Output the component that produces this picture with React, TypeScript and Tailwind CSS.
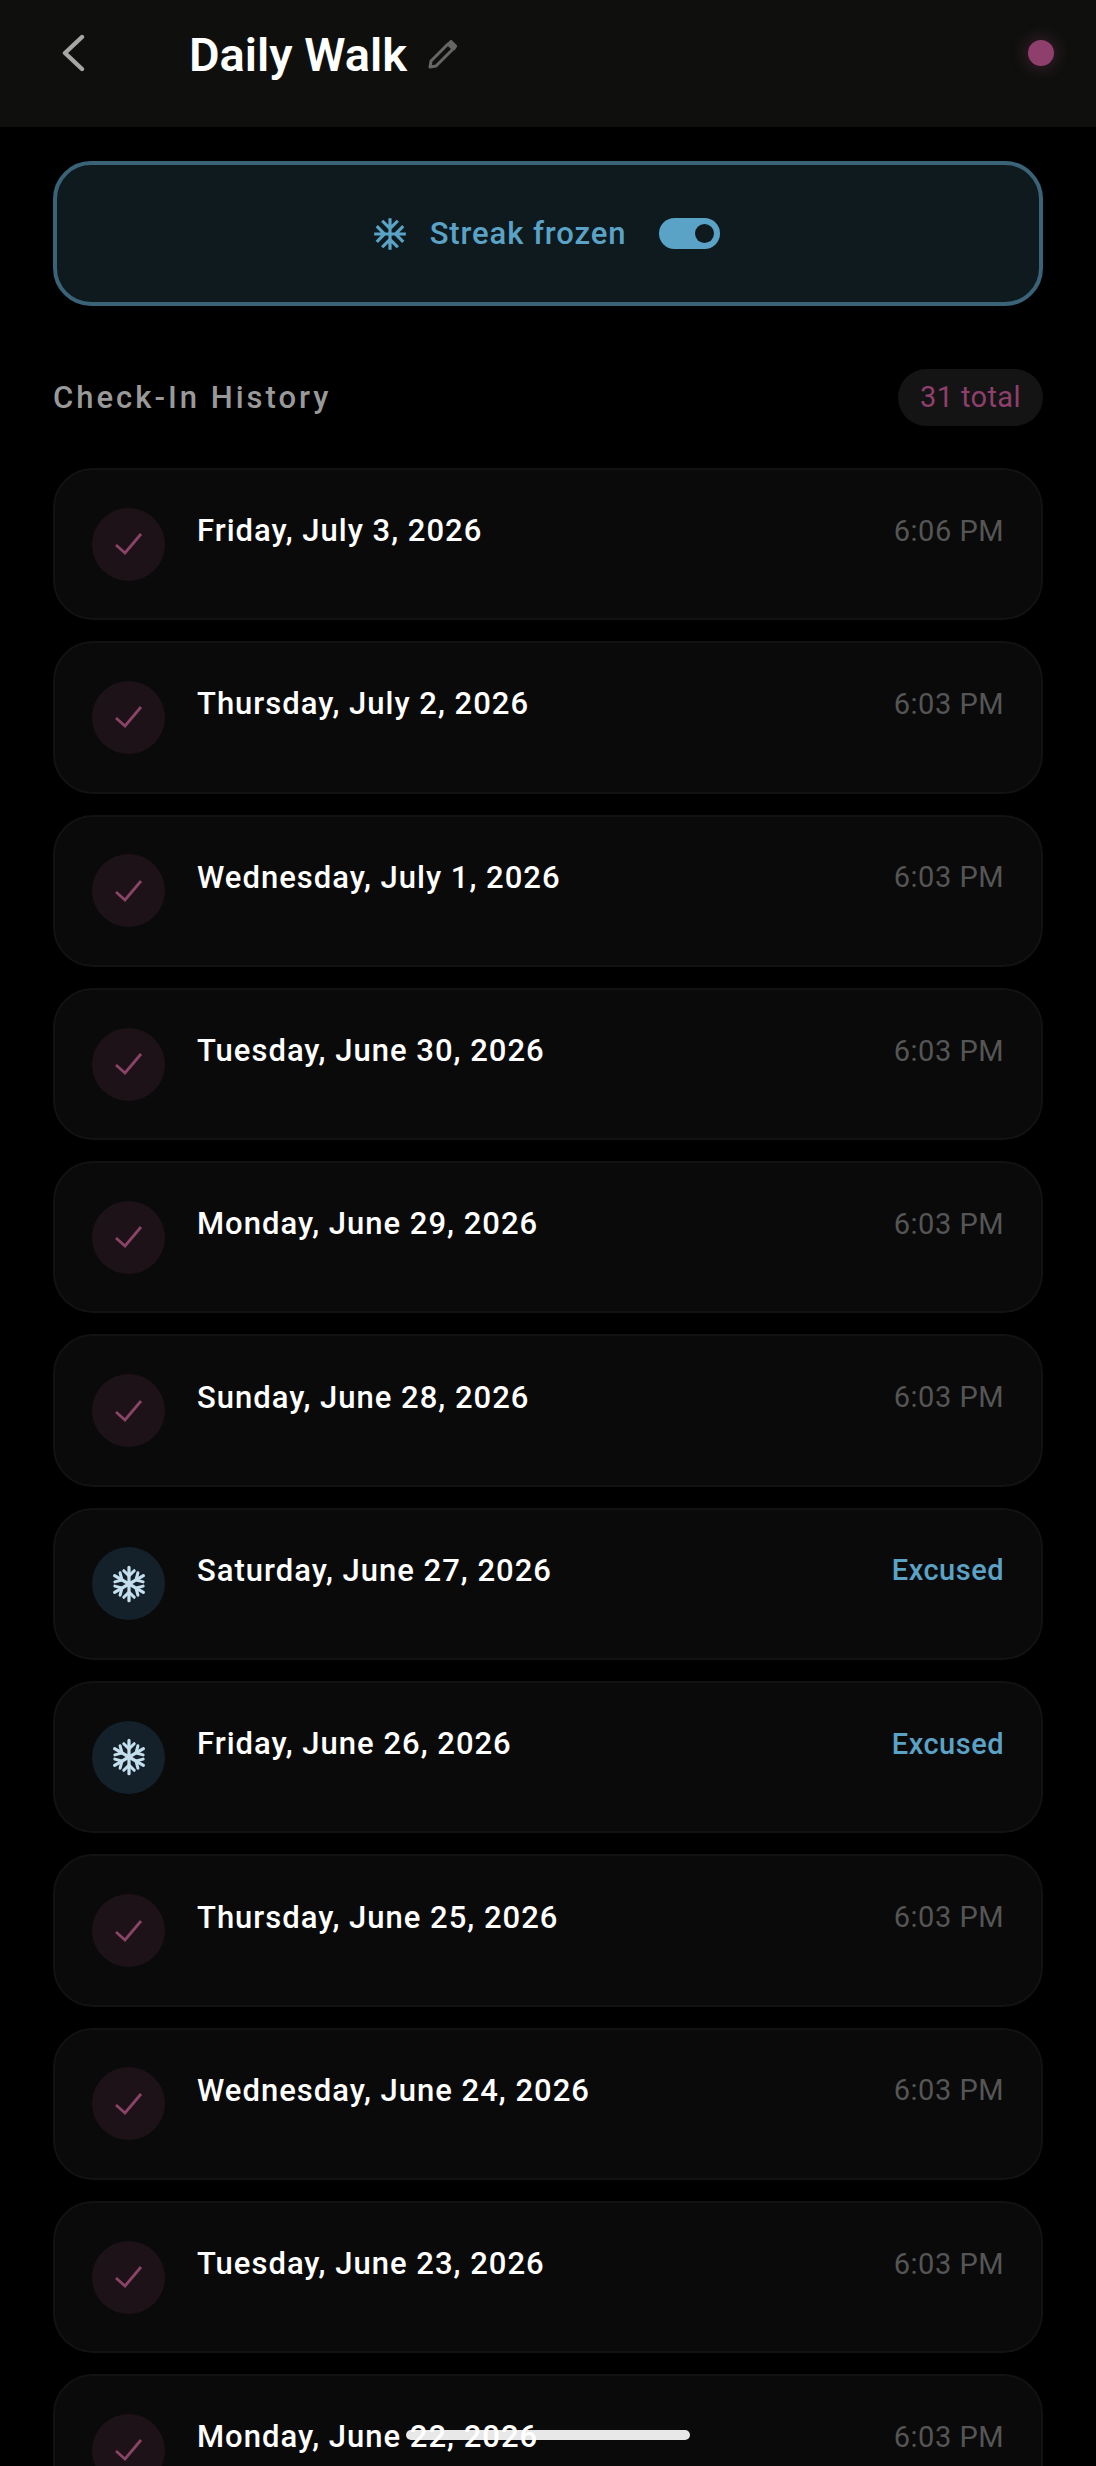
import React from 'react'
import { MdAcUnit } from 'react-icons/md'

const rows = [
    { date: 'Friday, July 3, 2026', time: '6:06 PM' },
    { date: 'Thursday, July 2, 2026', time: '6:03 PM' },
    { date: 'Wednesday, July 1, 2026', time: '6:03 PM' },
    { date: 'Tuesday, June 30, 2026', time: '6:03 PM' },
    { date: 'Monday, June 29, 2026', time: '6:03 PM' },
    { date: 'Sunday, June 28, 2026', time: '6:03 PM' },
    { date: 'Saturday, June 27, 2026', excused: true },
    { date: 'Friday, June 26, 2026', excused: true },
    { date: 'Thursday, June 25, 2026', time: '6:03 PM' },
    { date: 'Wednesday, June 24, 2026', time: '6:03 PM' },
    { date: 'Tuesday, June 23, 2026', time: '6:03 PM' },
    { date: 'Monday, June 22, 2026', time: '6:03 PM' },
]

function Flake() {
    const arm = (
        <g>
            <line x1="20" y1="20" x2="20" y2="2.5" strokeWidth="3.4" />
            <polyline points="14.5,6 20,11.5 25.5,6" strokeWidth="3.2" />
        </g>
    )
    return (
        <svg width="38" height="38" viewBox="0 0 40 40" fill="none" stroke="#c3dfed" strokeLinecap="round">
            {[0, 60, 120, 180, 240, 300].map((a) => (
                <g key={a} transform={`rotate(${a} 20 20)`}>{arm}</g>
            ))}
        </svg>
    )
}

function Row({ date, time, excused }: { date: string; time?: string; excused?: boolean }) {
    return (
        <div className="flex h-[152.3px] shrink-0 items-center rounded-[40px] border-2 border-[#121212] bg-[#0a0a0a] pl-[37px] pr-[37px]">
            {excused ? (
                <div className="flex h-[73px] w-[73px] shrink-0 items-center justify-center rounded-full bg-[#14202a]">
                    <Flake />
                </div>
            ) : (
                <div className="flex h-[73px] w-[73px] shrink-0 items-center justify-center rounded-full bg-[#1c1217]">
                    <svg width="30" height="24" viewBox="0 0 30 24" fill="none" stroke="#8a4468" strokeWidth="2.8">
                        <polyline points="2,13 11,21 27,2" />
                    </svg>
                </div>
            )}
            <div className="relative z-10 ml-8 mb-[26px] flex-1 text-[31px] font-medium leading-9 tracking-[1px] text-white">{date}</div>
            {excused ? (
                <div className="mb-[27px] text-[29px] font-medium leading-9 tracking-[0.5px] text-[#5ba3c6]">Excused</div>
            ) : (
                <div className="mb-[27px] text-[29px] font-normal leading-9 tracking-[0.5px] text-[#555555]">{time}</div>
            )}
        </div>
    )
}

export default function App() {
    return (
        <div className="relative flex h-[2466px] w-[1096px] flex-col overflow-hidden bg-black font-['Roboto',sans-serif]">
            <header className="flex h-[127px] shrink-0 items-start bg-[#0f100e] pl-[60px] pr-[42px] pt-[34px]">
                <svg width="26" height="38" viewBox="0 0 26 38" fill="none" stroke="#a6a6a6" strokeWidth="4.4" strokeLinecap="round" strokeLinejoin="round">
                    <polyline points="22,3 5,19 22,35" />
                </svg>
                <h1 className="ml-[103px] -mt-[6px] text-[47px] font-semibold leading-[54px] text-white">Daily Walk</h1>
                <svg className="ml-5 mt-[4px]" width="32" height="32" viewBox="0 0 32 32" fill="none">
                    <path d="M3 29 L4 23 L21 6 L26 11 L9 28 Z" stroke="#666" strokeWidth="3" strokeLinejoin="round" />
                    <path d="M24 3 L29 8 L27 11 L21.5 5.5 Z" fill="#666" stroke="#666" strokeWidth="2.4" strokeLinejoin="round" />
                </svg>
                <div className="ml-auto mt-[6px] h-[26px] w-[26px] rounded-full bg-[#8f3f6c] shadow-[0_0_14px_4px_rgba(143,63,108,0.25)]" />
            </header>

            <div className="mx-[53px] mt-[34px] flex h-[145px] shrink-0 items-center justify-center rounded-[38px] border-4 border-[#3a6378] bg-[#0f1a1f] pr-[5px] text-[#5ba3c6]">
                <MdAcUnit className="h-[38px] w-[38px]" />
                <span className="ml-[21px] mt-[2px] text-[31px] font-medium tracking-[0.9px]">Streak frozen</span>
                <div className="ml-[33px] flex h-[31px] w-[61px] items-center justify-end rounded-full bg-[#5ba3c6] pr-[6px]">
                    <div className="h-[19px] w-[19px] rounded-full bg-[#0f1a1f]" />
                </div>
            </div>

            <div className="mx-[53px] mt-[63px] flex h-[57px] shrink-0 items-center justify-between">
                <h2 className="mt-[2px] text-[31px] font-medium tracking-[3px] text-[#999999]">Check-In History</h2>
                <span className="flex h-[57px] items-center rounded-full bg-[#141414] px-[22px] text-[29px] tracking-[0.4px] text-[#8f3f6c]">31 total</span>
            </div>

            <div className="mx-[53px] mt-[42px] flex flex-col gap-[21px]">
                {rows.map((r) => (
                    <Row key={r.date} date={r.date} time={r.time} excused={r.excused} />
                ))}
            </div>

            <div className="absolute left-[406px] top-[2430px] h-[10px] w-[284px] rounded-full bg-[#e8e8e8]" />
        </div>
    )
}
